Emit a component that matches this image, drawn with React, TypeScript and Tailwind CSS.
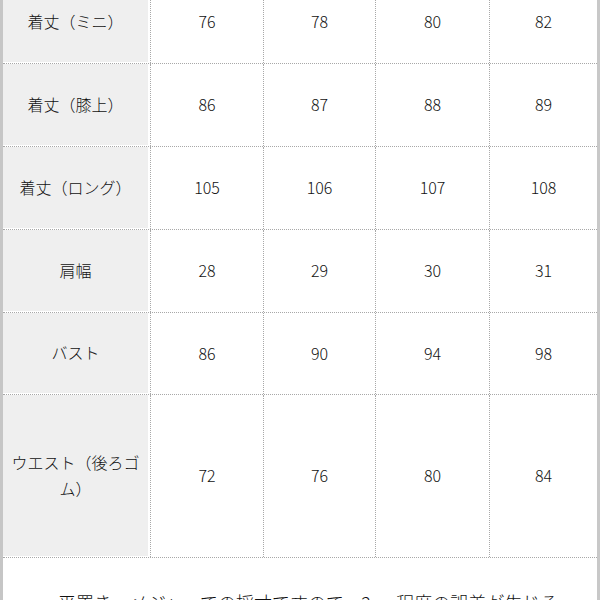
import React from "react";

const rows: { label: string; vals: string[]; h: string }[] = [
  { label: "着丈（ミニ）", vals: ["76", "78", "80", "82"], h: "h-[83px]" },
  { label: "着丈（膝上）", vals: ["86", "87", "88", "89"], h: "h-[83px]" },
  { label: "着丈（ロング）", vals: ["105", "106", "107", "108"], h: "h-[83px]" },
  { label: "肩幅", vals: ["28", "29", "30", "31"], h: "h-[83px]" },
  { label: "バスト", vals: ["86", "90", "94", "98"], h: "h-[82px]" },
  { label: "ウエスト（後ろゴム）", vals: ["72", "76", "80", "84"], h: "h-[163px]" },
];

const colW = ["w-[113px]", "w-[112px]", "w-[114px]", "w-[107px]"];

export default function App() {
  return (
    <div
      className="w-[600px] h-[600px] overflow-hidden bg-white flex text-[#111] font-light"
      style={{ fontFamily: '"Noto Sans CJK JP", "Noto Sans", sans-serif' }}
    >
      <div className="w-[3px] shrink-0 bg-[#c6c6c6]" />
      <div className="flex-1 flex flex-col">
        <div className="-mt-[19px] flex flex-col">
          {rows.map((r, i) => (
            <div key={i} className={`flex ${r.h} border-b border-dotted border-[#a8a8a8]`}>
              <div className="w-[148px] shrink-0 border-r border-dotted border-[#a8a8a8] bg-white pr-[2px] pb-[1px]">
                <div className="h-full bg-[#efefef] flex items-center justify-center px-[5px] pb-[2px] text-center text-[16px] leading-[26px]">
                  {r.label}
                </div>
              </div>
              {r.vals.map((v, j) => (
                <div
                  key={j}
                  className={`${colW[j]} shrink-0 flex items-center justify-center pb-[2px] text-[16px] leading-[26px] ${
                    j < 3 ? "border-r border-dotted border-[#a8a8a8]" : ""
                  }`}
                >
                  {v}
                </div>
              ))}
            </div>
          ))}
        </div>
        <div className="pt-[30px] pl-[55px] text-[18px] leading-[28px] whitespace-nowrap">
          平置き・メジャーでの採寸ですので、2cm程度の誤差が生じる
        </div>
      </div>
      <div className="w-[3px] shrink-0 bg-[#c8c8c8]" />
    </div>
  );
}
